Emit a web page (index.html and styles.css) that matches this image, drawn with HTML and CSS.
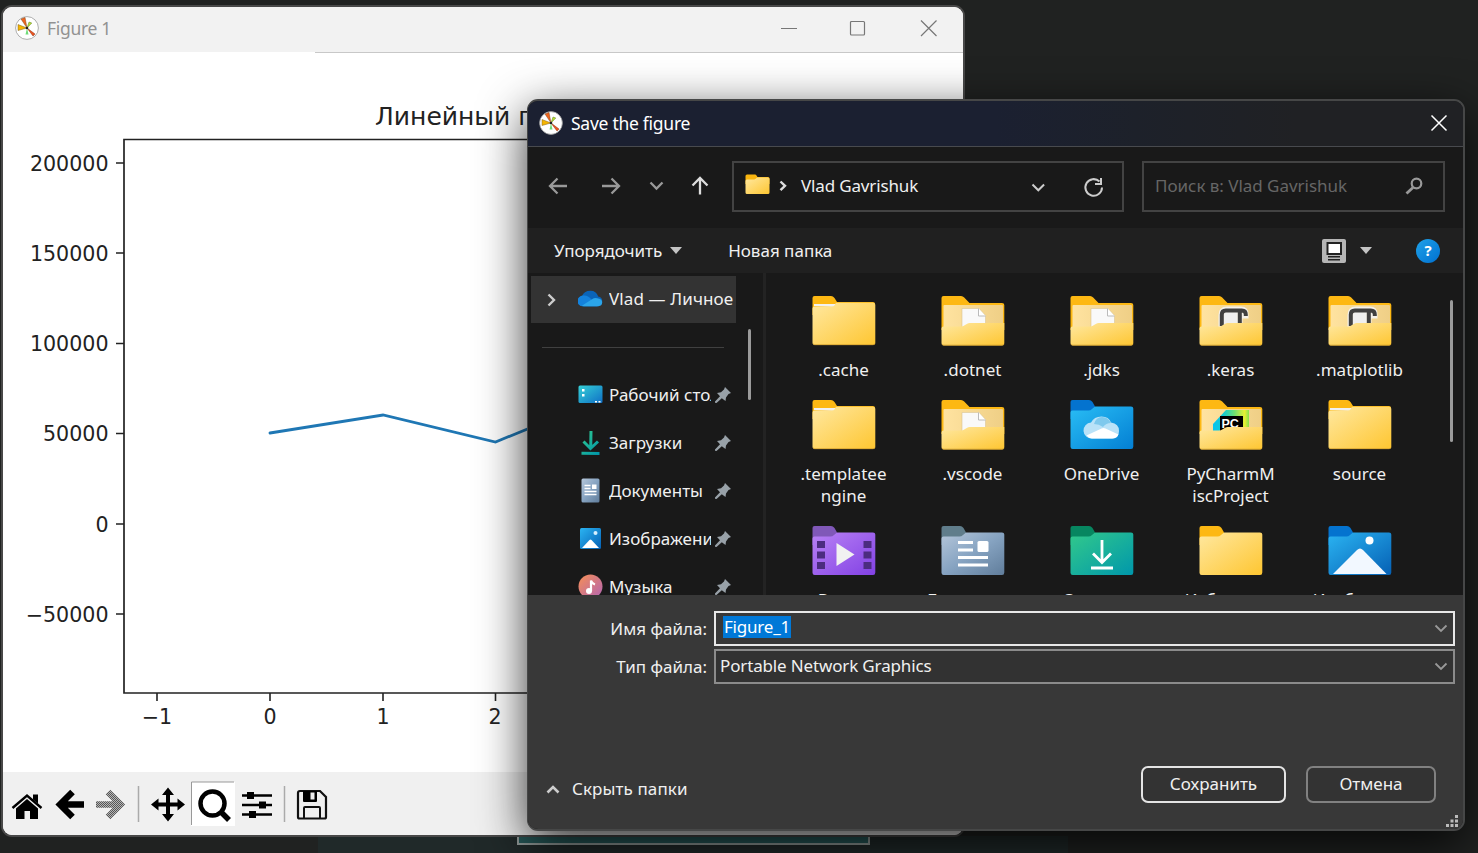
FILE: index.html
```html
<!DOCTYPE html>
<html lang="ru">
<head>
<meta charset="utf-8">
<title>Save the figure</title>
<link rel="stylesheet" href="styles.css">
</head>
<body>
<svg class="defs" width="0" height="0">
  <defs>
    <linearGradient id="gy" x1="0" y1="0" x2="1" y2="1"><stop offset="0" stop-color="#ffe8a0"/><stop offset="1" stop-color="#fec631"/></linearGradient>
    <linearGradient id="gin" x1="0" y1="0" x2="1" y2="0"><stop offset="0" stop-color="#ffe3a0"/><stop offset="1" stop-color="#efcf86"/></linearGradient>
    <linearGradient id="gb" x1="0" y1="0" x2="1" y2="1"><stop offset="0" stop-color="#29bdf5"/><stop offset="1" stop-color="#037fd3"/></linearGradient>
    <linearGradient id="gi" x1="0" y1="0" x2="1" y2="1"><stop offset="0" stop-color="#2bb4f2"/><stop offset="1" stop-color="#0560b4"/></linearGradient>
    <linearGradient id="gp" x1="0" y1="0" x2="1" y2="1"><stop offset="0" stop-color="#b982f5"/><stop offset="1" stop-color="#8241e4"/></linearGradient>
    <linearGradient id="gs" x1="0" y1="0" x2="1" y2="1"><stop offset="0" stop-color="#b5c6da"/><stop offset=".5" stop-color="#86a3c1"/><stop offset="1" stop-color="#607d9b"/></linearGradient>
    <linearGradient id="gg" x1="0" y1="0" x2="1" y2="1"><stop offset="0" stop-color="#32c98b"/><stop offset="1" stop-color="#0097ab"/></linearGradient>
    <linearGradient id="gm" x1="0" y1="0" x2="1" y2="1"><stop offset="0" stop-color="#f68f55"/><stop offset="1" stop-color="#b264b4"/></linearGradient>
    <linearGradient id="gd" x1="0" y1="0" x2="1" y2="1"><stop offset="0" stop-color="#35d0d6"/><stop offset="1" stop-color="#0f6fc6"/></linearGradient>
    <linearGradient id="gpc" x1="0" y1="0" x2="1" y2="0"><stop offset="0" stop-color="#07c3f2"/><stop offset=".3" stop-color="#14cbd0"/><stop offset=".6" stop-color="#6fe070"/><stop offset=".88" stop-color="#e8f032"/><stop offset="1" stop-color="#86e04e"/></linearGradient>
    <pattern id="checker" width="2" height="2" patternUnits="userSpaceOnUse"><rect width="2" height="2" fill="#b5b5b5"/><rect width="1" height="1" fill="#555"/><rect x="1" y="1" width="1" height="1" fill="#555"/></pattern>
    <symbol id="folder" viewBox="0 0 64 51">
      <path d="M0.5 20V3q0-2 2-2h16.500q2 0 3.500 2l2.500 4H61q2 0 2 2v15z" fill="#fdb813"/>
      <path d="M2 11V9h22l-2 3z" fill="#f1f1f1"/>
      <path d="M.5 13.500q0-2 2-2h17q2 0 3.500-1.500l.8-2.200H61q2.300 0 2.300 2v38q0 2.200-2.300 2.200H2.700Q.5 50 .5 47.800z" fill="url(#gy)"/>
      <path d="M1 48.500q.5 1.200 1.700 1.200H61q1.700 0 2-1.200" fill="none" stroke="#cf9d2d" stroke-width=".8"/>
    </symbol>
    <symbol id="folder-back" viewBox="0 0 64 51">
      <path d="M.5 32V3q0-2 2-2H20q2 0 3.200 1.500L28.500 8H61q2.300 0 2.300 2v25H.5z" fill="#fdb813"/>
      <path d="M2.500 11q0-1 1-1H61q1 0 1 1v22H2.500z" fill="url(#gin)"/>
    </symbol>
    <symbol id="folder-front" viewBox="0 0 64 51">
      <path d="M.5 33.500q0-2 2-2h17.500q2 0 3.600-1.200l2.600-1.500q1-.8 2.500-.8h34.600v20.200q0 2.300-2.300 2.300H2.700Q.5 50.500 .5 48.200z" fill="url(#gy)"/>
      <path d="M1 49q.5 1.200 1.700 1.200H61q1.700 0 2-1.200" fill="none" stroke="#cf9d2d" stroke-width=".8"/>
    </symbol>
    <symbol id="folder-doc" viewBox="0 0 64 51">
      <use href="#folder-back"/>
      <path d="M21 13.500h17l6.500 7v14H21z" fill="#f9f9f9" stroke="#d8c595" stroke-width=".6"/><path d="M37.500 13.500v7.500h7" fill="#fff" stroke="#bbb" stroke-width="1"/>
      <use href="#folder-front"/>
    </symbol>
    <symbol id="folder-scroll" viewBox="0 0 64 51">
      <use href="#folder-back"/>
      <path d="M22.500 32V20q0-5.500 5.500-5.500h14q4.500 0 4.500 4.500v1.500h-6V32" fill="#efefef" stroke="#f4f1ea" stroke-width="6"/>
      <path d="M22.800 31V19.500q0-4 4-4h16q4 0 4 4v1.500M40.800 31V17" fill="none" stroke="#404040" stroke-width="4"/>
      <use href="#folder-front"/>
    </symbol>
    <symbol id="folder-pc" viewBox="0 0 64 51">
      <use href="#folder-back"/>
      <path d="M14 32v-7L27 11h23v21z" fill="url(#gpc)"/><path d="M21 17h23v16H21z" fill="#000"/>
      <text x="22.500" y="29" font-family="Liberation Sans, sans-serif" font-size="12.500" font-weight="700" fill="#fff">PC</text>
      <use href="#folder-front"/>
    </symbol>
    <symbol id="tabfolder" viewBox="0 0 64 51">
      <path d="M.5 20V3q0-2 2-2H19q2 0 3.500 2L25 7.500V20z" fill="currentColor"/>
    </symbol>
    <symbol id="body" viewBox="0 0 64 51">
      <path d="M.5 13.500q0-2 2-2h16q2 0 3.500-1.500l3-2.500H61q2.300 0 2.300 2v38q0 2.500-2.300 2.500H2.700Q.5 50 .5 47.800z"/>
    </symbol>
    <symbol id="cloud" viewBox="0 0 26 18">
      <path d="M5 17A5 5 0 0 1 4 7q2-6 9-6 6 0 8 6 5 1 4 6-1 4-4 4z" fill="#0a64b8"/>
      <path d="M5 17A5 5 0 0 1 5 6q5-1 9 4l8 5-2 2z" fill="#1482dc"/><path d="M4 16.500l11-7q2-1.500 5-.8 5 .6 5.200 4.300Q25 17 21 17H6z" fill="#2ba5ea"/>
    </symbol>
    <symbol id="pin" viewBox="0 0 16 16"><path d="M10 0l6 6-2.500 1-2.500 3.500-.5 3.500L6.800 11.200 1.500 16 0 15.800v-1.400L5 9.200 2 6l4-.7L9 2.500z" fill="#98a1a8"/></symbol>
    <symbol id="mpl" viewBox="0 0 24 24">
      <circle cx="12" cy="12" r="11.400" fill="#fff" stroke="#999" stroke-width=".8"/>
      <path d="M12 12L6 3l4-1.500z" fill="#f0641e" stroke="#7a4a20" stroke-width=".5"/><path d="M12 12l-9-3.500v6z" fill="#f4b400" stroke="#806020" stroke-width=".5"/><path d="M12 12l2-6 2.800 1z" fill="#b4e030" stroke="#637a20" stroke-width=".5"/><path d="M12 12l-1.500 6.500h3z" fill="#6fdc78"/><path d="M12 12l8 6-2 2z" fill="#f0521e" stroke="#803010" stroke-width=".5"/>
      <circle cx="12" cy="12" r="1.300" fill="#222"/>
    </symbol>
  </defs>
</svg>

<main class="desktop">
  <div class="strip"></div>
  <div class="teal"></div>

  <section class="figure-window">
    <header class="fig-title">
      <svg class="app-icon"><use href="#mpl"/></svg>
      <span class="fig-name">Figure 1</span>
      <svg class="win-buttons" width="158" height="18" fill="none" stroke="#777" stroke-width="1.200"><path d="M1 9.500h16"/><rect x="70.500" y="2.500" width="14" height="13.500" rx="1"/><path d="M141 1.500l15.500 15.500M156.500 1.500L141 17"/></svg>
    </header>
    <svg class="plot" viewBox="3 52 960 720" width="960" height="720">
      <path d="M315 52.500h648" stroke="#c8c8c8"/>
      <path d="M700 139.500H124V693H700" fill="none" stroke="#222" stroke-width="1.700"/>
      <path d="M116 163h8M116 253h8M116 343.500h8M116 433.500h8M116 524h8M116 614h8M157 693v8M270 693v8M383 693v8M495.500 693v8" stroke="#222" stroke-width="1.600"/>
      <path d="M270 433L383 415L495.500 442L608 396" fill="none" stroke="#1f77b4" stroke-width="2.800" stroke-linecap="round"/>
      <g class="ytick"><text x="108.500" y="170.500">200000</text><text x="108.500" y="260.500">150000</text><text x="108.500" y="350.500">100000</text><text x="108.500" y="440.500">50000</text><text x="108.500" y="531.500">0</text><text x="108.500" y="621.500">−50000</text></g>
      <g class="xtick"><text x="157" y="723.500">−1</text><text x="270" y="723.500">0</text><text x="383" y="723.500">1</text><text x="495" y="723.500">2</text></g>
      <text class="plot-title" x="375" y="125">Линейный график</text>
    </svg>
    <footer class="fig-tools">
      <svg width="340" height="62" viewBox="3 772 340 62">
        <path d="M12.500 808L27 795.500l14.500 12.500" fill="none" stroke="#000" stroke-width="2.400"/><path d="M33 794.500h5v9l-5-4z"/><path d="M16 808.500l11-9.500 11 9.500V819h-8v-8h-5.500v8H16z"/>
        <path d="M72.500 792L60 804.500 72.500 817M60 804.500H84" fill="none" stroke="#000" stroke-width="6.500"/>
        <path d="M108 792l12.500 12.500L108 817M120 804.500H96" fill="none" stroke="url(#checker)" stroke-width="6.500"/>
        <path d="M138.500 786v36M284.500 786v36" stroke="#aaa" stroke-width="1.500"/>
        <path d="M168 791v28M155 804.500h26" stroke="#000" stroke-width="4"/><path d="M168 787.500l6 7.500h-12zM168 821.500l-6-7.500h12zM151 804.500l7.500-6v12zM185 804.500l-7.500-6v12z"/>
        <path d="M191 782h44v44h-44z" fill="#fff"/><path d="M191.500 825v-43H234" fill="none" stroke="#999"/>
        <circle cx="212.500" cy="803.500" r="12" fill="none" stroke="#000" stroke-width="4.500"/><path d="M221 812l8 8" stroke="#000" stroke-width="5.500"/>
        <path d="M242 795.500h30M242 805h30M242 814.500h30" stroke="#000" stroke-width="2.400"/><path d="M247 792h7v7h-7zM259 801.500h7v7h-7zM249 811h7v7h-7z"/>
        <path d="M300 791h20l6 6v20q0 1.500-1.500 1.500h-25q-1.500 0-1.500-1.500v-24q0-2 2-2z" fill="none" stroke="#111" stroke-width="2.200"/><path d="M303 791h14v10q0 1-1 1h-12q-1 0-1-1z"/><path d="M310.500 792.500h4v7h-4z" fill="#eee"/><path d="M304 818v-10q0-1 1-1h14q1 0 1 1v10" fill="none" stroke="#111" stroke-width="2"/>
      </svg>
    </footer>
  </section>

  <section class="dialog">
    <header class="dlg-title"><svg class="app-icon"><use href="#mpl"/></svg><span class="dlg-name">Save the figure</span>
      <svg class="close" width="18" height="18"><path d="M1.500 1.500l15 15M16.500 1.500l-15 15" stroke="#fff" stroke-width="1.500"/></svg></header>
    <div class="nav">
      <svg width="186" height="24" viewBox="541 175 186 24" fill="none" stroke="#999" stroke-width="2.300">
        <path d="M567 187h-17M557.500 179.500l-7.500 7.500 7.500 7.500M602 187h17M611.500 179.500l7.500 7.500-7.500 7.500"/><path d="M650.500 183.500l6 6 6-6"/><path d="M700 195.500v-16M692.500 186.500l7.500-7.500 7.500 7.500" stroke="#ddd"/>
      </svg>
      <div class="address">
        <svg class="mini-folder" width="25" height="21" viewBox="0 0 25 21"><path d="M.5 10V2q0-1.500 1.500-1.500h8q1 0 1.500 1L12.500 3H23q1.500 0 1.500 1.500V10z" fill="#f9b50f"/><path d="M.5 7q0-1.500 1.500-1.500h7q1 0 2-1l1-1h11q1.500 0 1.500 1.500v13.500q0 1.500-1.500 1.500H2q-1.500 0-1.500-1.500z" fill="url(#gy)"/></svg>
        <svg class="crumb" width="8" height="12"><path d="M1.500 1.500L6 5.800 1.500 10.200" fill="none" stroke="#ddd" stroke-width="2.400"/></svg>
        <span class="path">Vlad Gavrishuk</span>
        <svg class="addr-tools" width="74" height="22" fill="none" stroke="#ccc" stroke-width="2"><path d="M1.500 8.500l5.800 5.800 5.800-5.800"/><path d="M68.500 5.500a8.300 8.300 0 1 0 2.500 6"/><path d="M70 2v6h-6"/></svg>
      </div>
      <div class="search"><span>Поиск в: Vlad Gavrishuk</span><svg width="18" height="18" fill="none" stroke="#999" stroke-width="2.200"><circle cx="11.500" cy="6.500" r="4.800"/><path d="M8 10.500L1.500 16.500" stroke-width="2.800"/></svg></div>
    </div>
    <div class="commands">
      <span class="organize">Упорядочить</span><i class="tri"></i><span class="newfolder">Новая папка</span>
      <svg class="view" width="24" height="24"><rect width="24" height="24" rx="2" fill="#b6b6b6"/><rect x="5.500" y="4" width="13.500" height="11" fill="#fff" stroke="#222" stroke-width="2"/><path d="M6 17.800h12M6 20.800h12" stroke="#222" stroke-width="1.500"/></svg><i class="tri"></i><span class="help">?</span>
    </div>
    <div class="body">
      <aside class="sidebar">
        <div class="side-row selected"><svg class="expand" width="9" height="14"><path d="M1.500 1.500L7 7l-5.500 5.500" fill="none" stroke="#ccc" stroke-width="2.400"/></svg><svg class="side-icon"><use href="#cloud" y="2" height="19" width="25"/></svg><span class="side-label wide">Vlad — Личное</span></div>
        <div class="divider"></div>
        <div class="side-row"><svg class="side-icon" viewBox="0 0 25 25"><rect x=".5" y="3.500" width="24" height="17.500" rx="1.500" fill="url(#gd)"/><path d="M4 7h2.500v2.500H4zM4 12h2.500v2.500H4zM17 19h2v1.500h-2zM20.500 19h2v1.500h-2z" fill="#fff"/></svg><span class="side-label">Рабочий стол</span><svg class="pin"><use href="#pin"/></svg></div>
        <div class="side-row"><svg class="side-icon" viewBox="0 0 25 25" fill="none" stroke="url(#gg)" stroke-width="3"><path d="M13 1l-.3 18M5.500 11.500l7 7 7.500-7M3.500 23.300l18 .2"/></svg><span class="side-label">Загрузки</span><svg class="pin"><use href="#pin"/></svg></div>
        <div class="side-row"><svg class="side-icon" viewBox="0 0 25 25"><rect x="3.500" y=".5" width="18" height="24" rx="1.500" fill="url(#gs)"/><path d="M6.500 7.500h6M6.500 10.500h6M6.500 13.500h12M6.500 16.500h12" stroke="#fff" stroke-width="1.500"/><path d="M14 6.500h4.500V11H14z" fill="#fff"/></svg><span class="side-label">Документы</span><svg class="pin"><use href="#pin"/></svg></div>
        <div class="side-row"><svg class="side-icon" viewBox="0 0 25 25"><rect x="2" y="2" width="21" height="21" rx="1.500" fill="url(#gi)"/><circle cx="17.500" cy="7" r="2" fill="#d6f0ff"/><path d="M4 22l7.500-8q1-1 2 0l7.500 8z" fill="#fff"/></svg><span class="side-label">Изображения</span><svg class="pin"><use href="#pin"/></svg></div>
        <div class="side-row"><svg class="side-icon" viewBox="0 0 25 25"><circle cx="12.500" cy="12.500" r="12" fill="url(#gm)"/><circle cx="11" cy="17" r="3" fill="#fff"/><path d="M13 17V6.500q1 3 4 4" fill="none" stroke="#fff" stroke-width="2.200"/></svg><span class="side-label">Музыка</span><svg class="pin"><use href="#pin"/></svg></div>
      </aside>
      <div class="side-scroll"></div>
      <div class="files">
        <div class="file"><svg><use href="#folder"/></svg><span>.cache</span></div>
        <div class="file"><svg><use href="#folder-doc"/></svg><span>.dotnet</span></div>
        <div class="file"><svg><use href="#folder-doc"/></svg><span>.jdks</span></div>
        <div class="file"><svg><use href="#folder-scroll"/></svg><span>.keras</span></div>
        <div class="file"><svg><use href="#folder-scroll"/></svg><span>.matplotlib</span></div>
        <div class="file"><svg><use href="#folder"/></svg><span>.templatee<br>ngine</span></div>
        <div class="file"><svg><use href="#folder-doc"/></svg><span>.vscode</span></div>
        <div class="file"><svg color="#0473cf"><use href="#tabfolder"/><use href="#body" fill="url(#gb)"/><path d="M22 39.500a8 8 0 0 1-1-16q3-6 10.500-6t9.500 6q8 1 8 8.500t-7 7.500z" fill="#b9e2f8"/><path d="M24 25q2-7 8-7t9 6q-5 0-8 4-4-3-9-3z" fill="#7fc9ed"/><path d="M16.500 36.500l15-7q2-1 4 0l13 6q-2 4-6 4H22q-3 0-5.500-3z" fill="#fff"/></svg><span>OneDrive</span></div>
        <div class="file"><svg><use href="#folder-pc"/></svg><span>PyCharmM<br>iscProject</span></div>
        <div class="file"><svg><use href="#folder"/></svg><span>source</span></div>
        <div class="file"><svg color="#8058b8"><use href="#tabfolder"/><use href="#body" fill="url(#gp)"/><path d="M5 16h8v7H5zM5 26.500h8v7H5zM5 37h8v7H5zM51.500 16h8v7h-8zM51.500 26.500h8v7h-8zM51.500 37h8v7h-8z" fill="#4c2c80"/><path d="M24.500 18v23L42.500 29.500z" fill="#f1f1f1"/></svg><span>Видео</span></div>
        <div class="file"><svg color="#607d8b"><use href="#tabfolder"/><use href="#body" fill="url(#gs)"/><path d="M17 17.500h15M17 25h15M17 32.500h30M17 40h30" stroke="#fff" stroke-width="2.800"/><rect x="36.500" y="16" width="11" height="11" rx="1.500" fill="#fff"/></svg><span>Документы</span></div>
        <div class="file"><svg color="#078660"><use href="#tabfolder"/><use href="#body" fill="url(#gg)"/><path d="M32 15v22M23 28.500l9 9 9-9M21 43h22" stroke="#fff" stroke-width="2.800" fill="none"/></svg><span>Загрузки</span></div>
        <div class="file"><svg color="#fdb813"><use href="#tabfolder"/><use href="#body" fill="url(#gy)"/></svg><span>Избранное</span></div>
        <div class="file"><svg color="#0473cf"><use href="#tabfolder"/><use href="#body" fill="url(#gi)"/><circle cx="41.500" cy="15.500" r="4" fill="#fff"/><path d="M5 49l24-24q3-3 6 0l23.500 24z" fill="#f2f8ff"/></svg><span>Изображен<br>ия</span></div>
      </div>
      <div class="file-scroll"></div>
    </div>
    <div class="bottom">
      <div class="field"><label>Имя файла:</label><div class="combo active"><mark>Figure_1</mark><svg width="14" height="9"><path d="M1.500 1.500L7 7l5.500-5.500" fill="none" stroke="#999" stroke-width="1.800"/></svg></div></div>
      <div class="field"><label>Тип файла:</label><div class="combo"><span>Portable Network Graphics</span><svg width="14" height="9"><path d="M1.500 1.500L7 7l5.500-5.500" fill="none" stroke="#999" stroke-width="1.800"/></svg></div></div>
      <div class="actions">
        <svg class="up" width="14" height="10"><path d="M1.500 8.500L7 3l5.500 5.500" fill="none" stroke="#ccc" stroke-width="2.600"/></svg><span class="hide">Скрыть папки</span>
        <button class="btn save">Сохранить</button><button class="btn cancel">Отмена</button>
      </div>
      <svg class="grip" width="14" height="14" fill="#bbb"><path d="M10 1h3v3h-3zM5.500 5.500h3v3h-3zM10 5.500h3v3h-3zM1 10h3v3H1zM5.500 10h3v3h-3zM10 10h3v3h-3z"/></svg>
    </div>
  </section>
</main>
</body>
</html>
```
FILE: styles.css
```css
* { box-sizing: border-box; }
body { margin: 0; overflow: hidden; font-family: "Noto Sans", "Open Sans", sans-serif; font-size: 17px; color: #f0f0f0; }
svg { display: block; flex: none; }
.defs { position: absolute; }
.desktop { position: relative; width: 1478px; height: 853px; overflow: hidden; background: #202221; }
.strip { position: absolute; left: 318px; top: 836px; width: 750px; height: 17px; background: #202929; }
.teal { position: absolute; left: 517px; top: 820px; width: 353px; height: 25px; background: #265858; border: 2px solid #929b99; }

.figure-window { position: absolute; left: 1px; top: 5px; width: 964px; height: 832px; border: 2px solid #484848; border-radius: 11px; background: #fff; overflow: hidden; display: flex; flex-direction: column; }
.fig-title { height: 45px; flex: none; background: #f2f2f2; display: flex; align-items: center; padding: 0 25px 4px 12px; }
.app-icon { width: 24px; height: 24px; }
.fig-name { margin-left: 8px; padding-top: 1px; color: #929292; font-size: 17.5px; letter-spacing: -.3px; }
.win-buttons { margin-left: auto; }
.plot { flex: none; }
.plot text { font-family: "DejaVu Sans", sans-serif; font-size: 20.6px; fill: #222; }
.plot .plot-title { font-size: 25px; }
.ytick { text-anchor: end; }
.xtick { text-anchor: middle; }
.fig-tools { flex: 1; background: #f0f0f0; }

.dialog { position: absolute; left: 527px; top: 99px; width: 938px; height: 732px; border: 2px solid #464747; border-left-width: 1px; border-radius: 11px; background: #191919; overflow: hidden; display: flex; flex-direction: column; box-shadow: 0 14px 48px rgba(0,0,0,.8); }
.dlg-title { height: 46px; flex: none; background: linear-gradient(90deg, #1b2031 50%, #1d212a 65%, #202124 82%); border-bottom: 1px solid #484a4e; display: flex; align-items: center; padding: 0 15px 2px 11px; }
.dlg-name { margin-left: 8px; font-size: 17.5px; letter-spacing: -.27px; color: #fff; }
.close { margin-left: auto; }
.nav { height: 81px; flex: none; display: flex; align-items: center; padding: 0 18px 3px 13px; }
.address { width: 392px; height: 51px; margin-left: 5px; border: 2px solid #434343; display: flex; align-items: center; padding: 0 17px 0 11px; }
.mini-folder { margin-top: -4px; }
.crumb { margin-left: 9px; }
.path { margin-left: 14px; letter-spacing: -.15px; margin-top: -1px; }
.addr-tools { margin-left: auto; margin-top: 1px; }
.search { width: 303px; height: 51px; margin-left: 18px; border: 2px solid #434343; color: #666; display: flex; align-items: center; justify-content: space-between; padding: 0 20px 0 11px; }
.search span { letter-spacing: -.03px; margin-top: -1px; }
.commands { height: 45px; flex: none; background: #202020; display: flex; align-items: center; padding: 0 23px 0 26px; }
.tri { border: 6px solid transparent; border-top: 7px solid #c4c4c4; border-bottom: 0; margin-left: 8px; }
.newfolder { margin-left: 46px; }
.view { margin-left: auto; }
.view + .tri { margin-left: 14px; }
.help { width: 24px; height: 24px; border-radius: 50%; background: linear-gradient(135deg, #1fa2e8, #0070d0); margin-left: 44px; text-align: center; font-weight: 700; font-size: 15px; line-height: 23px; color: #fff; }
.organize { letter-spacing: -.05px; }
.newfolder { letter-spacing: 0; }

.body { height: 322px; flex: none; display: flex; overflow: hidden; }
.sidebar { width: 208px; flex: none; padding: 3px 0 0 3px; }
.side-row { height: 48px; display: flex; align-items: center; padding-left: 47px; }
.side-row.selected { height: 47px; padding-left: 16px; background: #333; overflow: hidden; }
.selected .side-icon { margin-left: 22px; }
.side-icon { width: 25px; height: 25px; margin-top: -1px; }
.side-label { width: 102px; margin-left: 6px; margin-right: 1px; margin-top: -2px; white-space: nowrap; overflow: hidden; letter-spacing: .02px; }
.side-label.wide { width: 126px; letter-spacing: .12px; }
.pin { width: 16px; height: 16px; margin-left: 3px; }
.divider { height: 1px; margin: 24px 12px 23px 11px; background: #404040; }
.side-scroll { width: 30px; flex: none; border-right: 3px solid #232323; padding: 56px 0 0 12px; }
.side-scroll::before { content: ""; display: block; width: 3px; height: 71px; border-radius: 2px; background: #9b9b9b; }
.files { margin-left: 13px; width: 645px; flex: none; padding-top: 22px; display: grid; grid-template-columns: repeat(5, 129px); align-content: start; row-gap: 18px; }
.file { display: flex; flex-direction: column; align-items: center; gap: 13px; text-align: center; line-height: 22px; letter-spacing: .02px; }
.file svg { width: 64px; height: 51px; }
.file-scroll { margin: 27px 0 0 26px; width: 3px; height: 142px; background: #9b9b9b; border-radius: 2px; }

.bottom { flex: 1; position: relative; background: #383838; padding: 15px 8px 0 0; }
.field { display: flex; justify-content: flex-end; align-items: center; height: 36px; margin-bottom: 2px; }
.field label { margin-right: 7px; letter-spacing: 0; }
.combo { width: 741px; height: 35px; border: 2px solid #8b8b8b; background: #323232; display: flex; align-items: center; justify-content: space-between; padding: 0 5px; }
.combo span { letter-spacing: -.15px; margin: -1px 0 0 -1px; }
.combo.active { border-color: #e8e8e8; background: #383838; padding-left: 7px; }
mark { background: #0078d7; color: #fff; line-height: 22px; padding: 0 1px; margin-top: -3px; letter-spacing: -.2px; }
.actions { display: flex; align-items: center; margin-top: 82px; padding: 0 19px 0 18px; }
.hide { margin: 8px auto 0 12px; letter-spacing: .1px; }
.up { margin-top: 8px; }
.btn { height: 37px; border: 2px solid #e4e4e4; border-radius: 7px; background: #333; color: #f0f0f0; font: inherit; padding: 0 0 2px; }
.save { width: 145px; }
.cancel { width: 130px; margin-left: 20px; border-color: #818181; }
.grip { position: absolute; right: 4px; bottom: 1px; }
```
